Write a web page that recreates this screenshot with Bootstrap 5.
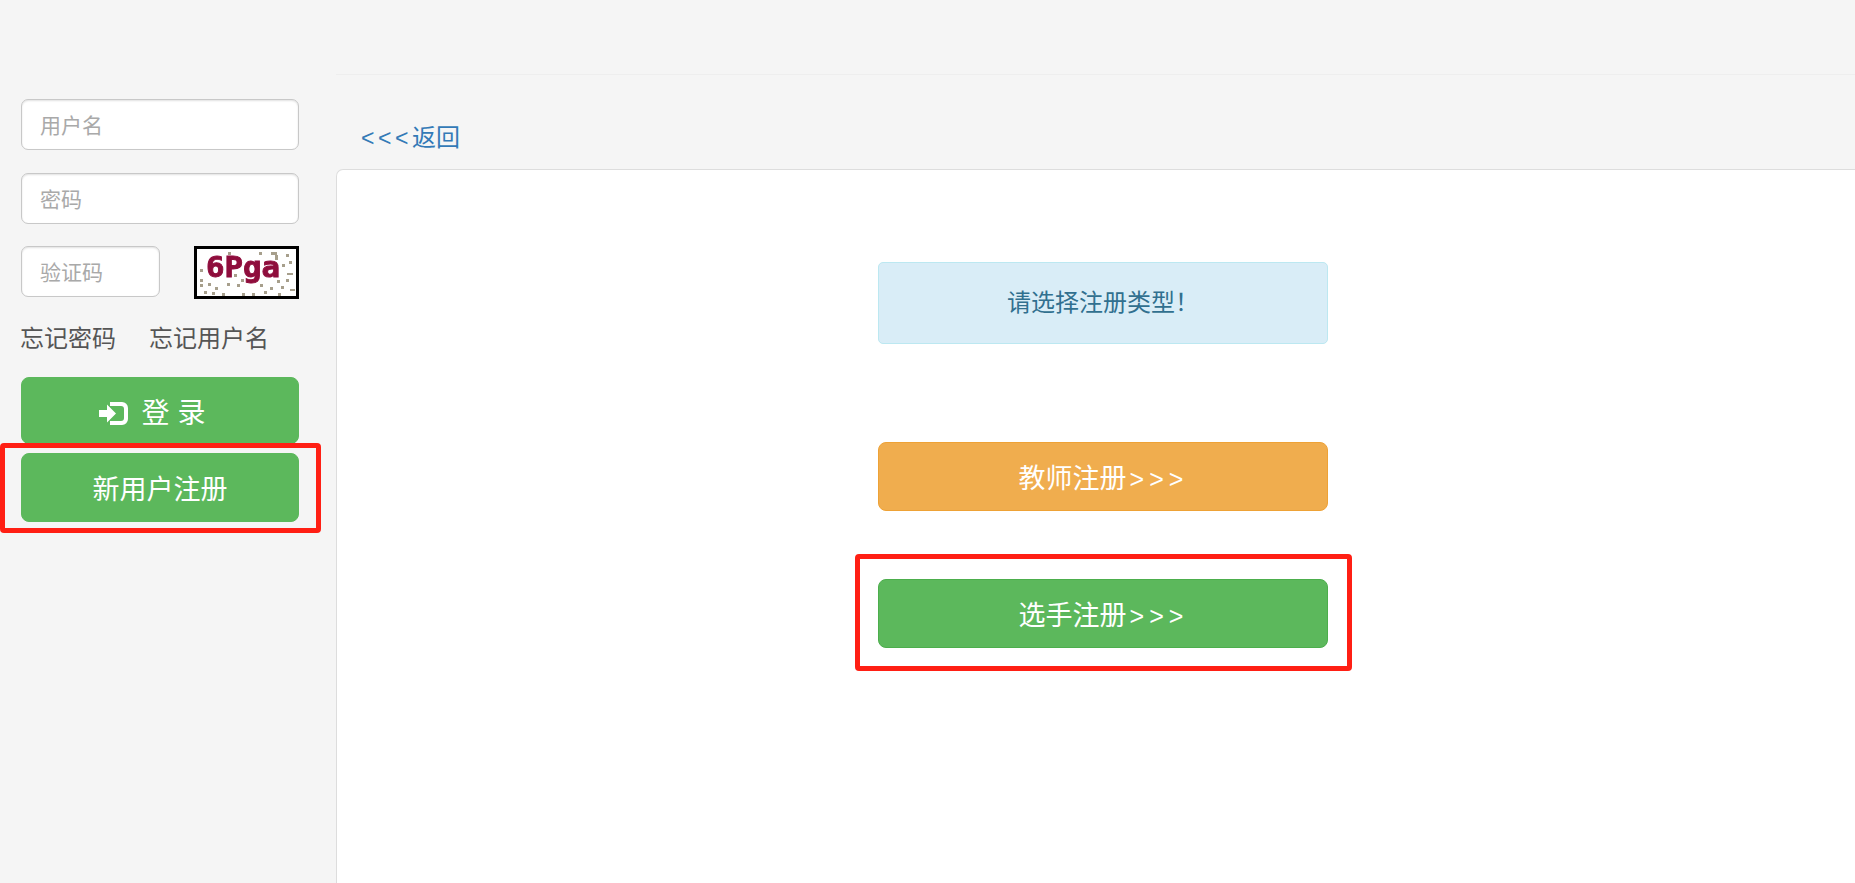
<!DOCTYPE html>
<html lang="zh-CN">
<head>
  <meta charset="UTF-8">
  <title>新用户注册</title>
  <link href="https://cdn.jsdelivr.net/npm/bootstrap@5.3.2/dist/css/bootstrap.min.css" rel="stylesheet">
  <style>
    html, body { height: 100%; }
    body { background: #f5f5f5; overflow: hidden; font-family: "Liberation Sans", "Noto Sans CJK SC", sans-serif; }
    .page-wrap { height: 883px; }
    .side-col { width: 336px; flex: none; padding: 99px 0 0 21px; }
    .side-inner { width: 278px; }
    .login-input { height: 51px; font-size: 21px; padding: 3px 18px 0; border: 1px solid #c8c8c8; border-radius: 7px; box-shadow: inset 0 1px 2px rgba(0,0,0,.12); }
    .login-input::placeholder { color: #a9a9a9; }
    .field-gap { margin-bottom: 23px; }
    .field-gap-last { margin-bottom: 22px; }
    .code-input { width: 139px; margin-bottom: 0; }
    .captcha-box { display: block; width: 105px; height: 53px; }
    .forgot-row { font-size: 24px; line-height: 34px; color: #555; margin: 23px 0 21px -1px; gap: 33px; }
    .forgot-row a { color: #555; text-decoration: none; }
    .big-btn { display: block; width: 100%; height: 69px; font-size: 27px; line-height: 1; color: #fff; border-radius: 8px; padding: 6px 0 0 1px; }
    .btn-green { background: #5cb85c; border: 1px solid #5cb85c; color: #fff; }
    .btn-green-line { background: #5cb85c; border: 1px solid #4cae4c; color: #fff; }
    .btn-orange { background: #f0ad4e; border: 1px solid #eea236; color: #fff; }
    .login-btn { height: 67px; margin-bottom: 9px; padding: 6px 16px 0 0; font-size: 28px; }
    .side-reg { padding: 6px 0 0; }
    .login-icon { width: 30px; height: 25px; margin-right: 13px; vertical-align: -3px; }
    .arrow-text { font-size: 25px; letter-spacing: 5px; margin-left: 3px; }
    .annot-wrap { position: relative; }
    .annot-box { position: absolute; border: 5px solid #ff1f14; border-radius: 4px; pointer-events: none; }
    .annot-side { left: -21px; right: -22px; top: -10px; bottom: -11px; }
    .annot-main { left: -23px; right: -24px; top: -25px; bottom: -23px; }
    .top-strip { height: 75px; border-bottom: 1px solid #eee; }
    .back-row { height: 94px; padding: 46px 0 0 25px; font-size: 24px; line-height: 34px; }
    .back-row a { color: #337ab7; text-decoration: none; }
    .back-row span { font-size: 23px; letter-spacing: 3.6px; }
    .panel-box { background: #fff; border: 1px solid #ddd; border-right: 0; border-bottom: 0; border-top-left-radius: 7px; padding: 92px 0 0 541px; height: 714px; }
    .panel-col { width: 450px; }
    .notice { height: 82px; background: #d9edf7; border: 1px solid #bce8f1; border-radius: 5px; color: #31708f; font-size: 24px; margin-bottom: 98px; }
    .orange-gap { margin-bottom: 68px; }
  </style>
</head>
<body>
<div class="page-wrap d-flex">
  <div class="side-col">
    <div class="side-inner">
      <input type="text" class="form-control login-input field-gap" placeholder="用户名">
      <input type="password" class="form-control login-input field-gap-last" placeholder="密码">
      <div class="d-flex justify-content-between align-items-start">
        <input type="text" class="form-control login-input code-input" placeholder="验证码">
        <svg class="captcha-box" viewBox="0 0 105 53">
          <defs><filter id="soft"><feGaussianBlur stdDeviation="0.6"/></filter></defs>
          <rect x="1.5" y="1.5" width="102" height="50" fill="#fff" stroke="#000" stroke-width="3"/>
          <g filter="url(#soft)">
            <text x="12" y="31" font-family="DejaVu Sans Mono, monospace" font-weight="700" font-size="29" fill="#8f0a3c" stroke="#8f0a3c" stroke-width="0.9" textLength="74" lengthAdjust="spacingAndGlyphs">6Pga</text>
            <g fill="#a79f8c">
              <rect x="34" y="6" width="3" height="3"/><rect x="65" y="6" width="3" height="3"/><rect x="77" y="6" width="6" height="3"/><rect x="81" y="9" width="3" height="5"/><rect x="92" y="8" width="3" height="3"/><rect x="88" y="18" width="3" height="3"/><rect x="95" y="15" width="3" height="3"/><rect x="93" y="27" width="6" height="2"/><rect x="6" y="23" width="3" height="3"/><rect x="6" y="33" width="3" height="3"/><rect x="40" y="28" width="3" height="3"/><rect x="47" y="33" width="3" height="3"/><rect x="83" y="34" width="3" height="3"/><rect x="92" y="33" width="3" height="3"/>
              <rect x="6" y="38" width="3" height="3"/><rect x="14" y="37" width="3" height="3"/><rect x="21" y="41" width="3" height="3"/><rect x="33" y="37" width="3" height="3"/><rect x="43" y="38" width="3" height="3"/><rect x="66" y="38" width="3" height="3"/><rect x="76" y="41" width="3" height="3"/><rect x="87" y="40" width="3" height="3"/><rect x="96" y="43" width="5" height="2"/>
              <rect x="10" y="45" width="3" height="3"/><rect x="18" y="46" width="3" height="3"/><rect x="28" y="47" width="3" height="3"/><rect x="48" y="47" width="3" height="3"/><rect x="58" y="47" width="3" height="3"/><rect x="70" y="45" width="3" height="3"/><rect x="84" y="47" width="3" height="3"/>
            </g>
          </g>
        </svg>
      </div>
      <div class="forgot-row d-flex">
        <a href="#">忘记密码</a>
        <a href="#">忘记用户名</a>
      </div>
      <button type="button" class="btn big-btn btn-green login-btn">
        <svg class="login-icon" viewBox="0 0 30 25" fill="#fff"><path d="M0 9h8V3.5l9 9-9 9V16H0z"/><path d="M11 1h12a6 6 0 0 1 6 6v11a6 6 0 0 1-6 6H11v-4h11a3 3 0 0 0 3-3V8a3 3 0 0 0-3-3H11z"/></svg><span>登 录</span>
      </button>
      <div class="annot-wrap">
        <button type="button" class="btn big-btn btn-green side-reg">新用户注册</button>
        <div class="annot-box annot-side"></div>
      </div>
    </div>
  </div>
  <div class="flex-grow-1">
    <div class="top-strip"></div>
    <div class="back-row"><a href="#"><span>&lt;&lt;&lt;</span>返回</a></div>
    <div class="panel-box">
      <div class="panel-col">
        <div class="notice d-flex align-items-center justify-content-center">请选择注册类型！</div>
        <button type="button" class="btn big-btn btn-orange orange-gap">教师注册<span class="arrow-text">&gt;&gt;&gt;</span></button>
        <div class="annot-wrap">
          <button type="button" class="btn big-btn btn-green-line">选手注册<span class="arrow-text">&gt;&gt;&gt;</span></button>
          <div class="annot-box annot-main"></div>
        </div>
      </div>
    </div>
  </div>
</div>
<script src="https://cdn.jsdelivr.net/npm/bootstrap@5.3.2/dist/js/bootstrap.bundle.min.js"></script>
</body>
</html>
